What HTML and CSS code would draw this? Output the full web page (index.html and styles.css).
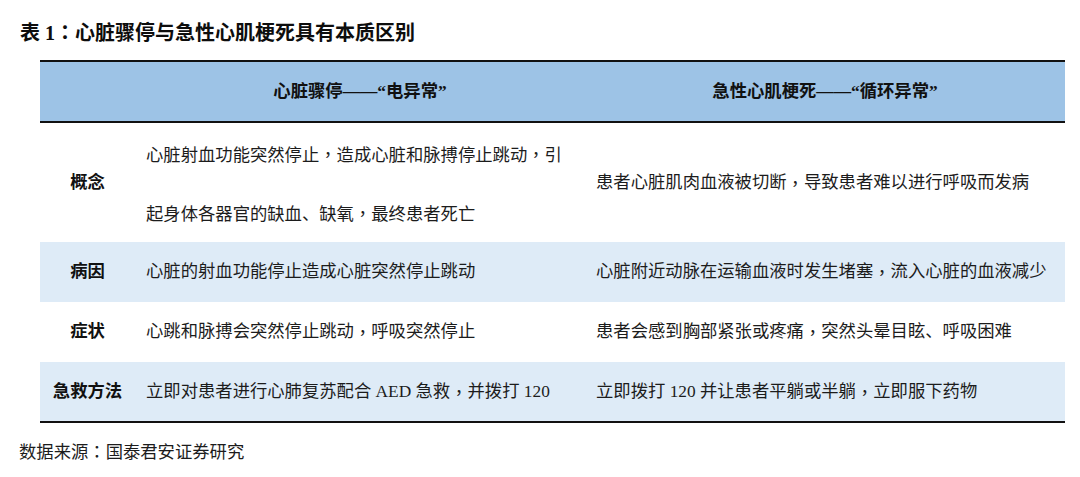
FILE: index.html
```html
<!DOCTYPE html>
<html lang="zh-CN">
<head>
<meta charset="utf-8">
<title>表 1：心脏骤停与急性心肌梗死具有本质区别</title>
<link rel="stylesheet" href="styles.css">
</head>
<body>
<div class="page">
  <h1 class="title">表 1<span class="p" lang="zh-TW">：</span>心脏骤停与急性心肌梗死具有本质区别</h1>
  <div class="table">
    <div class="row head">
      <div class="cell label"></div>
      <div class="cell center">心脏骤停——“电异常”</div>
      <div class="cell center">急性心肌梗死——“循环异常”</div>
    </div>
    <div class="row tall">
      <div class="cell label">概念</div>
      <div class="cell text multi">心脏射血功能突然停止<span class="p" lang="zh-TW">，</span>造成心脏和脉搏停止跳动<span class="p" lang="zh-TW">，</span>引<br>起身体各器官的缺血、缺氧<span class="p" lang="zh-TW">，</span>最终患者死亡</div>
      <div class="cell text">患者心脏肌肉血液被切断<span class="p" lang="zh-TW">，</span>导致患者难以进行呼吸而发病</div>
    </div>
    <div class="row band r60">
      <div class="cell label">病因</div>
      <div class="cell text">心脏的射血功能停止造成心脏突然停止跳动</div>
      <div class="cell text">心脏附近动脉在运输血液时发生堵塞<span class="p" lang="zh-TW">，</span>流入心脏的血液减少</div>
    </div>
    <div class="row r60">
      <div class="cell label">症状</div>
      <div class="cell text">心跳和脉搏会突然停止跳动<span class="p" lang="zh-TW">，</span>呼吸突然停止</div>
      <div class="cell text">患者会感到胸部紧张或疼痛<span class="p" lang="zh-TW">，</span>突然头晕目眩、呼吸困难</div>
    </div>
    <div class="row band r59">
      <div class="cell label">急救方法</div>
      <div class="cell text">立即对患者进行心肺复苏配合 AED 急救<span class="p" lang="zh-TW">，</span>并拨打 120</div>
      <div class="cell text">立即拨打 120 并让患者平躺或半躺<span class="p" lang="zh-TW">，</span>立即服下药物</div>
    </div>
  </div>
  <p class="source">数据来源<span class="p" lang="zh-TW">：</span>国泰君安证券研究</p>
</div>
</body>
</html>
```

FILE: styles.css
```css
html, body {
  margin: 0;
  padding: 0;
  background: #ffffff;
}

.page {
  font-family: "Liberation Serif", "Noto Sans CJK SC", serif;
  color: #1c1c1c;
  padding-top: 20px;
}

.p {
  font-family: "Noto Sans CJK TC", "Noto Sans CJK SC", sans-serif;
}

.title {
  margin: 0 0 0 20px;
  font-size: 20px;
  line-height: 24px;
  font-weight: 700;
  color: #0d0d0d;
}

.table {
  margin: 15px 0 0 40px;
  width: 1025px;
  border-top: 2px solid #111111;
  border-bottom: 2px solid #111111;
}

.row {
  display: grid;
  grid-template-columns: 95px 450px 480px;
}

.row.head {
  height: 59px;
  background: #9dc3e6;
  border-bottom: 2px solid #111111;
  font-weight: 700;
  color: #111111;
}

.row.tall { height: 119px; }
.row.r60 { height: 60px; }
.row.r59 { height: 59px; }

.row.band { background: #deebf7; }

.cell {
  display: flex;
  align-items: center;
  font-size: 17.33px;
  line-height: 24px;
}

.cell.center {
  justify-content: center;
}

.cell.label {
  justify-content: center;
  font-weight: 700;
  color: #111111;
}

.cell.text {
  padding-left: 11px;
}

.cell.multi {
  display: block;
  line-height: 57px;
  padding-top: 2px;
}

.source {
  margin: 16px 0 0 19px;
  font-size: 17.33px;
  line-height: 24px;
  color: #1c1c1c;
}
```
